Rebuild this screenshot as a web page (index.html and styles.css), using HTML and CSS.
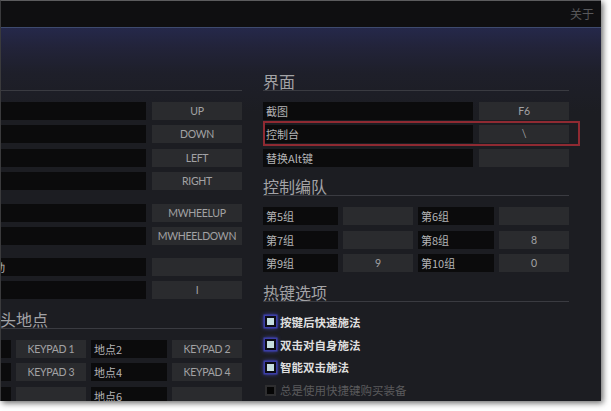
FILE: index.html
```html
<!DOCTYPE html>
<html lang="zh">
<head>
<meta charset="utf-8">
<title>设置</title>
<link rel="stylesheet" href="styles.css">
</head>
<body>
<div class="window">
  <div class="topbar"><span class="about">关于</span></div>
  <div class="content">
    <div class="col left">
      <div class="hdr">&nbsp;</div>
      <div class="row"><div class="lbl"></div><div class="val">UP</div></div>
      <div class="row"><div class="lbl"></div><div class="val">DOWN</div></div>
      <div class="row"><div class="lbl"></div><div class="val">LEFT</div></div>
      <div class="row"><div class="lbl"></div><div class="val">RIGHT</div></div>
      <div class="row gap1"><div class="lbl"></div><div class="val">MWHEELUP</div></div>
      <div class="row"><div class="lbl"></div><div class="val">MWHEELDOWN</div></div>
      <div class="row gap2"><div class="lbl">镜头边缘移动</div><div class="val"></div></div>
      <div class="row"><div class="lbl"></div><div class="val">I</div></div>
      <div class="hdr next">保存的镜头地点</div>
      <div class="grid4">
        <div class="lbl"></div><div class="val">KEYPAD 1</div><div class="lbl">地点2</div><div class="val">KEYPAD 2</div>
        <div class="lbl"></div><div class="val">KEYPAD 3</div><div class="lbl">地点4</div><div class="val">KEYPAD 4</div>
        <div class="lbl"></div><div class="val"></div><div class="lbl">地点6</div><div class="val"></div>
      </div>
    </div>
    <div class="col right">
      <div class="hdr">界面</div>
      <div class="row"><div class="lbl">截图</div><div class="val">F6</div></div>
      <div class="row hlrow"><div class="lbl">控制台</div><div class="val">\</div><div class="hl"></div></div>
      <div class="row"><div class="lbl">替换Alt键</div><div class="val"></div></div>
      <div class="hdr next">控制编队</div>
      <div class="grid4">
        <div class="lbl">第5组</div><div class="val"></div><div class="lbl">第6组</div><div class="val"></div>
        <div class="lbl">第7组</div><div class="val"></div><div class="lbl">第8组</div><div class="val">8</div>
        <div class="lbl">第9组</div><div class="val">9</div><div class="lbl">第10组</div><div class="val">0</div>
      </div>
      <div class="hdr next">热键选项</div>
      <div class="checks">
        <div class="chk on"><span class="box"></span><span class="ct">按键后快速施法</span></div>
        <div class="chk on"><span class="box"></span><span class="ct">双击对自身施法</span></div>
        <div class="chk on"><span class="box"></span><span class="ct">智能双击施法</span></div>
        <div class="chk off"><span class="box"></span><span class="ct">总是使用快捷键购买装备</span></div>
      </div>
    </div>
  </div>
</div>
</body>
</html>
```
FILE: styles.css
```css
html, body {
  margin: 0;
  padding: 0;
  background: #ffffff;
}
body {
  width: 611px;
  height: 411px;
  overflow: hidden;
  font-family: "Noto Sans CJK SC", "Noto Sans", sans-serif;
}
.window {
  width: 601px;
  height: 401px;
  box-sizing: border-box;
  overflow: hidden;
  background: #1c1d22;
  border-top: 1px solid #5c5c5e;
  border-left: 1px solid #3a3a3c;
  box-shadow: 2px 2px 6px rgba(0, 0, 0, 0.6);
  display: flex;
  flex-direction: column;
}
.topbar {
  height: 26px;
  flex: none;
  background: #0f0f11;
  border-bottom: 1px solid #3e4a6e;
  display: flex;
  justify-content: flex-end;
  align-items: center;
}
.about {
  font-size: 12px;
  color: #58585a;
  padding-right: 7px;
  line-height: 26px;
}
.content {
  flex: 1;
  display: flex;
  gap: 21px;
  padding-top: 44px;
  background: linear-gradient(#25284a 0px, #222339 20px, #1e1f2a 45px, #1c1d22 85px);
}
.col {
  width: 306px;
  flex: none;
}
.left {
  margin-left: -65px;
}
.hdr {
  font-size: 16px;
  line-height: 18px;
  color: #a3a3a6;
  border-bottom: 1px solid #3a3b41;
  margin-bottom: 11px;
  white-space: nowrap;
}
.hdr.next {
  margin-top: 10.8px;
}
.row {
  display: flex;
  gap: 6px;
  height: 18px;
  margin-bottom: 5.3px;
  position: relative;
}
.row.gap1 {
  margin-top: 14.1px;
}
.row.gap2 {
  margin-top: 12.7px;
}
.lbl {
  flex: 1;
  background: #0b0b0c;
  font-size: 11px;
  line-height: 18px;
  color: #b4b4b6;
  padding-left: 3px;
  white-space: nowrap;
  overflow: hidden;
}
.val {
  width: 90px;
  flex: none;
  background: #2a2b2e;
  font-family: "Lato", "Noto Sans", sans-serif;
  font-size: 10.5px;
  letter-spacing: -0.3px;
  line-height: 18px;
  color: #a2a2a4;
  text-align: center;
  white-space: nowrap;
  overflow: hidden;
}
.grid4 {
  display: grid;
  grid-template-columns: 75px 70px 76px 70px;
  grid-auto-rows: 18px;
  column-gap: 5px;
  row-gap: 5.3px;
  margin-bottom: 5.3px;
}
.grid4 .val {
  width: auto;
}
.hl {
  position: absolute;
  left: 0;
  right: -11px;
  top: -4px;
  bottom: -3px;
  border: 2px solid #8f2a32;
  pointer-events: none;
}
.checks {
  padding-top: 0;
}
.chk {
  display: flex;
  align-items: center;
  height: 18px;
  margin-bottom: 4.8px;
}
.box {
  width: 7px;
  height: 7px;
  flex: none;
  margin-left: 2px;
  margin-right: 4px;
  border: 2px solid #0c0c14;
}
.chk.on .box {
  background: #c6dfe0;
  box-shadow: 0 0 0 1.5px #3b3ea6, 0 0 4px 1px #4a4ccc;
}
.chk.off .box {
  background: #050505;
  border-color: #2e2e30;
}
.ct {
  font-size: 11.5px;
  line-height: 14px;
  white-space: nowrap;
}
.chk.on .ct {
  color: #dedede;
  font-weight: bold;
}
.chk.off .ct {
  color: #5a5a5c;
}
```
